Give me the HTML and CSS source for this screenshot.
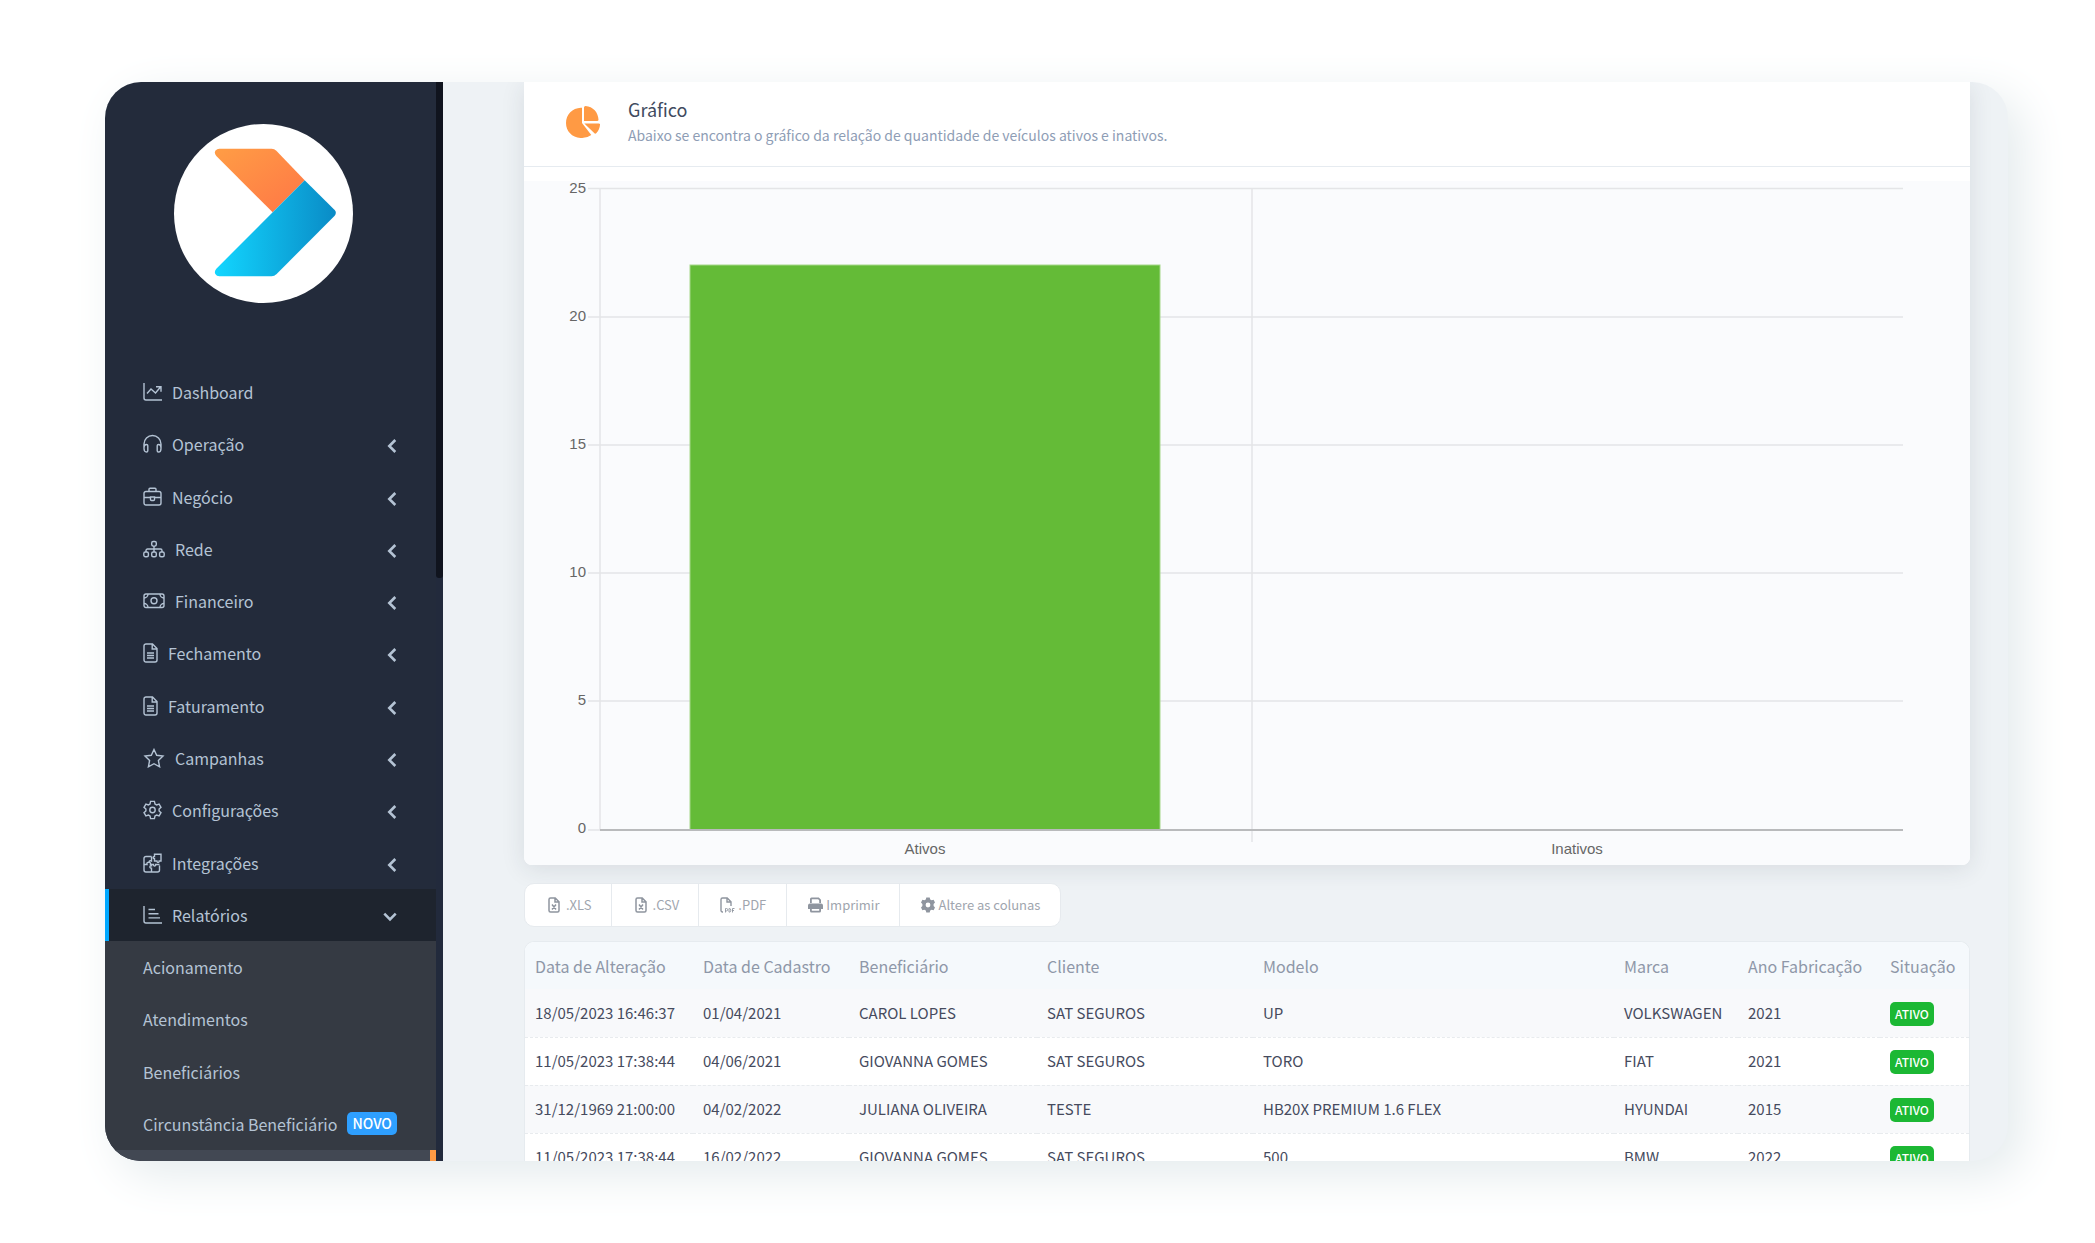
FILE: index.html
```html
<!DOCTYPE html>
<html lang="pt-BR">
<head>
<meta charset="utf-8">
<title>Relatórios - Veículos</title>
<link rel="stylesheet" href="styles.css">
</head>
<body>
<svg class="defs" aria-hidden="true">
  <symbol id="i-left" viewBox="0 0 10 16"><path d="M8.300 2 2.300 8l6 6" fill="none" stroke="currentColor" stroke-width="2.600"/></symbol>
  <symbol id="i-file" viewBox="0 0 15 20"><path d="M3 1h6.500L14 5.500V17a2 2 0 0 1-2 2H3a2 2 0 0 1-2-2V3a2 2 0 0 1 2-2zM9.200 1v5H14M4 10h7M4 12.500h7M4 15h7"/></symbol>
  <symbol id="i-xls" viewBox="0 0 12 16"><path d="M2.500 1h4.700L11 4.800V13.500A1.500 1.500 0 0 1 9.500 15h-7A1.500 1.500 0 0 1 1 13.500v-11A1.500 1.500 0 0 1 2.500 1zM7 1.500V5h3.500M4 7.500l4 5M8 7.500l-4 5" fill="none" stroke="currentColor" stroke-width="1.500"/></symbol>
</svg>
<div class="window">
  <aside class="sidebar">
    <a class="logo" href="#" aria-label="Início">
      <svg viewBox="0 0 537 537">
        <defs>
          <linearGradient id="g-orange" x1="0" y1="0" x2="1" y2="1"><stop offset="0" stop-color="#ff9d45"/><stop offset="1" stop-color="#ff7646"/></linearGradient>
          <linearGradient id="g-blue" x1="0" y1="0" x2="1" y2="0"><stop offset="0" stop-color="#12d6ff"/><stop offset="1" stop-color="#0a8bc6"/></linearGradient>
        </defs>
        <path fill="url(#g-orange)" d="M136 74H293Q301 74 307 80L392 169 296 265 127 96Q120 88 124 80 129 74 136 74Z"/>
        <path fill="url(#g-blue)" d="M392 169 482 258Q489 266 482 275L308 450Q301 457 293 457H136Q128 457 124 450 120 442 127 434L296 265Z"/>
      </svg>
    </a>
    <nav class="menu">
      <ul>
        <li><a href="#"><svg class="ico" viewBox="0 0 19 20"><path d="M1 1v15a2 2 0 0 0 2 2h16M4 11.500l4-4.500 4.500 4L17.500 5M13 4.700h5v5"/></svg>Dashboard</a></li>
        <li><a href="#"><svg class="ico" viewBox="0 0 19 20"><path d="M1 14v-4a8.500 8.500 0 0 1 17 0v4M1 14.500c0-3 1-4 2.500-4 .8 0 1.300.4 1.300 1.200v5c0 .8-.5 1.300-1.300 1.300C2 18 1 17 1 14.500zM18 14.500c0-3-1-4-2.500-4-.8 0-1.300.4-1.300 1.200v5c0 .8.5 1.300 1.300 1.300 1.500 0 2.500-1 2.500-3.500z"/></svg>Operação<svg class="chev"><use href="#i-left"/></svg></a></li>
        <li><a href="#"><svg class="ico" viewBox="0 0 19 20"><path d="M3 4.500h13a2 2 0 0 1 2 2V16a2 2 0 0 1-2 2H3a2 2 0 0 1-2-2V6.500a2 2 0 0 1 2-2zM6 4.500V2.200A1 1 0 0 1 7 1.200h5a1 1 0 0 1 1 1v2.300M1 10.500h6.500M11.500 10.500H18M7.500 10h4v2.500a1 1 0 0 1-1 1h-2a1 1 0 0 1-1-1z"/></svg>Negócio<svg class="chev"><use href="#i-left"/></svg></a></li>
        <li><a href="#"><svg class="ico ico-wide" viewBox="0 0 22 20"><path d="M11 7v6M3 13v-1.500a1.500 1.500 0 0 1 1.500-1.500h13a1.500 1.500 0 0 1 1.500 1.500V13"/><rect x="8.700" y="2.500" width="4.600" height="4.600" rx="1.500"/><rect x=".8" y="13" width="4.600" height="4.800" rx="1.500"/><rect x="8.700" y="13" width="4.600" height="4.800" rx="1.500"/><rect x="16.600" y="13" width="4.600" height="4.800" rx="1.500"/></svg>Rede<svg class="chev"><use href="#i-left"/></svg></a></li>
        <li><a href="#"><svg class="ico ico-wide" viewBox="0 0 22 20"><rect x="1" y="3" width="20" height="13.500" rx="2"/><circle cx="11" cy="9.700" r="3"/><path d="M1 7a4 4 0 0 0 4-4M21 7a4 4 0 0 1-4-4M1 12.500a4 4 0 0 1 4 4M21 12.500a4 4 0 0 0-4 4"/></svg>Financeiro<svg class="chev"><use href="#i-left"/></svg></a></li>
        <li><a href="#"><svg class="ico ico-narrow"><use href="#i-file"/></svg>Fechamento<svg class="chev"><use href="#i-left"/></svg></a></li>
        <li><a href="#"><svg class="ico ico-narrow"><use href="#i-file"/></svg>Faturamento<svg class="chev"><use href="#i-left"/></svg></a></li>
        <li><a href="#"><svg class="ico ico-wide" viewBox="0 0 22 20"><path d="m11 1.500 2.700 5.800 6.300.8-4.600 4.400 1.200 6.300-5.600-3.100-5.600 3.100 1.200-6.300L2 8.100l6.300-.8z"/></svg>Campanhas<svg class="chev"><use href="#i-left"/></svg></a></li>
        <li><a href="#"><svg class="ico" viewBox="0 0 19 20"><path d="M7.600 1.400h3.800l.6 2.600 1.600.9 2.500-.8 1.900 3.200L16.100 9v2l1.900 1.700-1.900 3.200-2.500-.8-1.600.9-.6 2.600H7.600L7 16l-1.600-.9-2.500.8L1 12.700 2.900 11V9L1 7.300l1.900-3.200 2.500.8L7 4z"/><circle cx="9.500" cy="10" r="2.700"/></svg>Configurações<svg class="chev"><use href="#i-left"/></svg></a></li>
        <li><a href="#"><svg class="ico" viewBox="0 0 19 20"><path d="M8.500 3.500H3a2 2 0 0 0-2 2V17a2 2 0 0 0 2 2h11.500a2 2 0 0 0 2-2v-4.500M8.500 3.500V8c-1.500-.6-2.500 0-2.500 1.300M1 11.500h3c-.5-1.600.5-2.300 1.800-2.300s2.200 1 1.700 2.300h1M8.500 11.500v1.300c-1.800-.3-2.500 2.400 0 2.400V19M8.500 11.500h2c-.3 2 2.500 2 2.200 0h3.800M11.500 1.200h6.500V8h-1.800c.2 1.800-2.400 1.800-2.300 0h-2.400V5.700c-1.600.3-1.700-2.400 0-2.200z"/></svg>Integrações<svg class="chev"><use href="#i-left"/></svg></a></li>
        <li class="open"><a href="#"><svg class="ico" viewBox="0 0 19 20"><path d="M1 1v15a2 2 0 0 0 2 2h16M5.500 4.500H12M5.500 8.700h10M5.500 12.900h11.500"/></svg>Relatórios<svg class="chev chev-down" viewBox="0 0 14 10"><path d="M1.300 1.700 7 7.400l5.700-5.700" fill="none" stroke="currentColor" stroke-width="2.600"/></svg></a></li>
      </ul>
      <ul class="submenu">
        <li><a href="#">Acionamento</a></li>
        <li><a href="#">Atendimentos</a></li>
        <li><a href="#">Beneficiários</a></li>
        <li><a href="#">Circunstância Beneficiário <span class="tag">NOVO</span></a></li>
      </ul>
      <div class="next-item"></div>
    </nav>
  </aside>
  <div class="scrollbar"><div class="thumb"></div></div>
  <main>
    <section class="card">
      <header>
        <svg class="pie" viewBox="0 0 34 33"><path fill="#ff9a44" d="M16 1.700V17l9.300 12A15.700 15.700 0 0 1 14.500 32C6 31.500 0 25 0 17 0 8.500 6.500 2 14.800 1.700zM18 1.500Q18 .2 19.500 0C27 .5 32.300 6.500 32.500 13.800Q32.500 15 31 15H18zM18.300 17.500h14.500q1.400 0 1.200 1.500c-.3 3-1.600 6-3.800 8.200q-1 1-2-.2z"/></svg>
        <div>
          <h2>Gráfico</h2>
          <p>Abaixo se encontra o gráfico da relação de quantidade de veículos ativos e inativos.</p>
        </div>
      </header>
      <svg class="chart" viewBox="0 0 1446 684" role="img" aria-label="Veículos ativos e inativos">
        <g class="grid">
          <path d="M64 7.500H1379M64 136H1379M64 264H1379M64 392H1379M64 520H1379M64 649H76M76 7V649M728 7V661"/>
        </g>
        <rect class="bar" x="166" y="84" width="470" height="565"/>
        <path class="axis" d="M76 649H1379"/>
        <g class="ylab">
          <text x="62" y="12">25</text><text x="62" y="140">20</text><text x="62" y="268">15</text><text x="62" y="396">10</text><text x="62" y="524">5</text><text x="62" y="652">0</text>
        </g>
        <g class="xlab"><text x="401" y="673">Ativos</text><text x="1053" y="673">Inativos</text></g>
      </svg>
    </section>

    <div class="toolbar">
      <button type="button"><svg class="xls"><use href="#i-xls"/></svg>.XLS</button>
      <button type="button"><svg class="xls"><use href="#i-xls"/></svg>.CSV</button>
      <button type="button" class="tight"><svg class="pdf" viewBox="0 0 15 16"><path d="M3 15h-.5A1.500 1.500 0 0 1 1 13.500v-11A1.500 1.500 0 0 1 2.500 1h4.700L11 4.800V9M7 1.500V5h3.500" fill="none" stroke="currentColor" stroke-width="1.400"/><path d="M5.500 15.500V11.500h1a1.200 1.200 0 0 1 0 2.400h-1M9 11.500v3.600h.5a1.300 1.800 0 0 0 0-3.600zM12.500 15.500v-4h2M12.500 13.500h1.500" fill="none" stroke="currentColor" stroke-width=".9"/></svg>.PDF</button>
      <button type="button" class="tight"><svg class="print" viewBox="0 0 15 16"><path fill="currentColor" d="M2 6V2a1.500 1.500 0 0 1 1.500-1.500h7.300L13 2.700V6h-1.800V3.500l-1-1.200H3.800V6zM2 6.500h11a2 2 0 0 1 2 2V12h-2v-1.500H2V12H0V8.500a2 2 0 0 1 2-2zM2 10.500h11V14a1.500 1.500 0 0 1-1.500 1.500h-8A1.500 1.500 0 0 1 2 14zm1.800 1.500v1.800h7.400V12z" fill-rule="evenodd"/></svg>Imprimir</button>
      <button type="button" class="tight"><svg class="gear" viewBox="0 0 14 16"><path fill="currentColor" fill-rule="evenodd" d="M5.300.5h3.400l.5 2 1.400.8 2-.6L14 5.500l-1.400 1.600v1.800L14 10.500l-1.400 2.800-2-.6-1.400.8-.5 2H5.300l-.5-2-1.400-.8-2 .6L0 10.500l1.400-1.600V7.100L0 5.500l1.400-2.800 2 .6 1.400-.8zM7 5.600a2.400 2.400 0 1 0 0 4.800 2.400 2.400 0 0 0 0-4.800z"/></svg>Altere as colunas</button>
    </div>

    <div class="table-wrap">
      <table>
        <colgroup><col class="c1"><col class="c2"><col class="c3"><col class="c4"><col class="c5"><col class="c6"><col class="c7"><col class="c8"></colgroup>
        <thead><tr><th>Data de Alteração</th><th>Data de Cadastro</th><th>Beneficiário</th><th>Cliente</th><th>Modelo</th><th>Marca</th><th>Ano Fabricação</th><th>Situação</th></tr></thead>
        <tbody>
          <tr><td>18/05/2023 16:46:37</td><td>01/04/2021</td><td>CAROL LOPES</td><td>SAT SEGUROS</td><td>UP</td><td>VOLKSWAGEN</td><td>2021</td><td><span class="badge">ATIVO</span></td></tr>
          <tr><td>11/05/2023 17:38:44</td><td>04/06/2021</td><td>GIOVANNA GOMES</td><td>SAT SEGUROS</td><td>TORO</td><td>FIAT</td><td>2021</td><td><span class="badge">ATIVO</span></td></tr>
          <tr><td>31/12/1969 21:00:00</td><td>04/02/2022</td><td>JULIANA OLIVEIRA</td><td>TESTE</td><td>HB20X PREMIUM 1.6 FLEX</td><td>HYUNDAI</td><td>2015</td><td><span class="badge">ATIVO</span></td></tr>
          <tr><td>11/05/2023 17:38:44</td><td>16/02/2022</td><td>GIOVANNA GOMES</td><td>SAT SEGUROS</td><td>500</td><td>BMW</td><td>2022</td><td><span class="badge">ATIVO</span></td></tr>
        </tbody>
      </table>
    </div>
  </main>
</div>
</body>
</html>
```
FILE: styles.css
```css
* { box-sizing: border-box; }

body {
  margin: 0;
  padding: 82px 87px 82px 105px;
  background: #fff;
  font-family: "Noto Sans CJK JP", "Noto Sans", sans-serif;
  font-size: 16px;
}

ul { list-style: none; margin: 0; padding: 0; }
a { color: inherit; text-decoration: none; }
.defs { display: none; }

.window {
  display: flex;
  height: calc(100vh - 164px);
  border-radius: 36px;
  overflow: hidden;
  background: #eef2f5;
  box-shadow: 14px 14px 48px #e4ebed;
}

/* Sidebar */
.sidebar {
  flex: 0 0 331px;
  display: flex;
  flex-direction: column;
  background: #232b3b;
  color: #b4c3d4;
}

.logo {
  flex: none;
  width: 179px;
  height: 179px;
  margin: 42px 69px 63px;
  border-radius: 50%;
  background: #fff;
}
.logo svg { display: block; width: 100%; height: 100%; }

.menu { flex: 1; display: flex; flex-direction: column; min-height: 0; }
.menu ul { flex: 11; display: flex; flex-direction: column; }
.menu .submenu { flex: 4; background: #353a43; }
.menu li { flex: 1; display: flex; border-left: 4px solid transparent; }
.menu li a {
  flex: 1;
  display: flex;
  align-items: center;
  padding: 0 39px 0 34px;
  line-height: 24px;
}
.menu .open { background: #1e242e; border-left-color: #00a8ff; }
.next-item { flex: 0 0 11px; background: #424853; border-right: 6px solid #ff9a44; }

.ico {
  width: 19px;
  height: 20px;
  margin-right: 10px;
  fill: none;
  stroke: currentColor;
  stroke-width: 1.4px;
}
.ico-wide { width: 22px; }
.ico-narrow { width: 15px; }

.chev { width: 10px; height: 16px; margin-left: auto; margin-top: 4px; }
.chev-down { width: 14px; height: 10px; }

.tag {
  margin-left: 10px;
  padding: 0 5px;
  border-radius: 5px;
  background: #2e9fff;
  color: #fff;
  font-size: 14px;
  font-weight: 500;
  line-height: 23px;
}

.scrollbar { flex: 0 0 7px; background: #222a3c; }
.thumb { height: 46%; background: #10141e; border-radius: 0 0 3px 3px; }

/* Content */
main { flex: 1; min-width: 0; padding: 0 38px 0 81px; }

.card {
  background: #fff;
  border-radius: 0 0 8px 8px;
  box-shadow: 0 4px 24px rgba(40, 50, 60, .11);
}
.card header {
  display: flex;
  align-items: center;
  gap: 28px;
  height: 85px;
  margin-bottom: 14px;
  padding: 0 42px 4px;
  border-bottom: 1px solid #e6ebf0;
}
.pie { width: 34px; height: 33px; }
.card h2 { margin: 0; color: #414b60; font-size: 18px; font-weight: 400; line-height: 27px; }
.card p { margin: 0; color: #8e9db5; font-size: 14px; line-height: 25px; }

.chart { display: block; width: 100%; background: #fafbfd; border-radius: 0 0 8px 8px; }
.chart text { font-family: "Liberation Sans", Arial, sans-serif; font-size: 15px; fill: #666; }
.ylab { text-anchor: end; }
.xlab { text-anchor: middle; }
.grid path { fill: none; stroke: #e4e5e7; stroke-width: 1.5px; }
.bar { fill: #64bb37; stroke: #a5d78a; stroke-width: 1px; }
.axis { stroke: #b9babc; stroke-width: 2px; }

.toolbar {
  display: inline-flex;
  margin: 18px 0 14px;
  vertical-align: top;
  overflow: hidden;
  border: 1px solid #e6eaee;
  border-radius: 10px;
  background: #fff;
}
.toolbar button {
  display: flex;
  align-items: center;
  gap: 6px;
  height: 42px;
  padding: 0 19px 0 23px;
  border: 0;
  border-right: 1px solid #e6eaee;
  background: none;
  color: #a0a5ae;
  font: 13px/20px "Noto Sans CJK JP", "Noto Sans", sans-serif;
}
.toolbar button:last-child { border-right: 0; }
.toolbar .tight { gap: 3px; padding: 0 20px 0 21px; }
.toolbar svg { color: #8f959f; height: 16px; }
.xls { width: 12px; }
.pdf, .print { width: 15px; }
.gear { width: 14px; }

.table-wrap {
  border: 1px solid #e6ebef;
  border-bottom: 0;
  border-radius: 10px 10px 0 0;
  overflow: hidden;
  background: #fff;
}
table { width: 100%; table-layout: fixed; border-collapse: collapse; }
.c1 { width: 168px; }
.c2 { width: 156px; }
.c3 { width: 188px; }
.c4 { width: 216px; }
.c5 { width: 361px; }
.c6 { width: 124px; }
.c7 { width: 142px; }
.c8 { width: 89px; }
th, td { padding: 0 0 0 10px; text-align: left; white-space: nowrap; font-weight: 400; }
th { height: 47px; background: #f5f9fc; color: #8e97a8; font-size: 16px; }
td { height: 48px; border-bottom: 1px dashed #e8ebee; color: #464b5e; font-size: 15px; line-height: 24px; }
tbody tr:nth-child(odd) { background: #f8f9fb; }
.badge {
  display: inline-block;
  padding: 0 5px;
  border-radius: 5px;
  background: #1cb834;
  color: #fff;
  font-size: 12px;
  font-weight: 500;
  line-height: 24px;
  vertical-align: middle;
}
```
